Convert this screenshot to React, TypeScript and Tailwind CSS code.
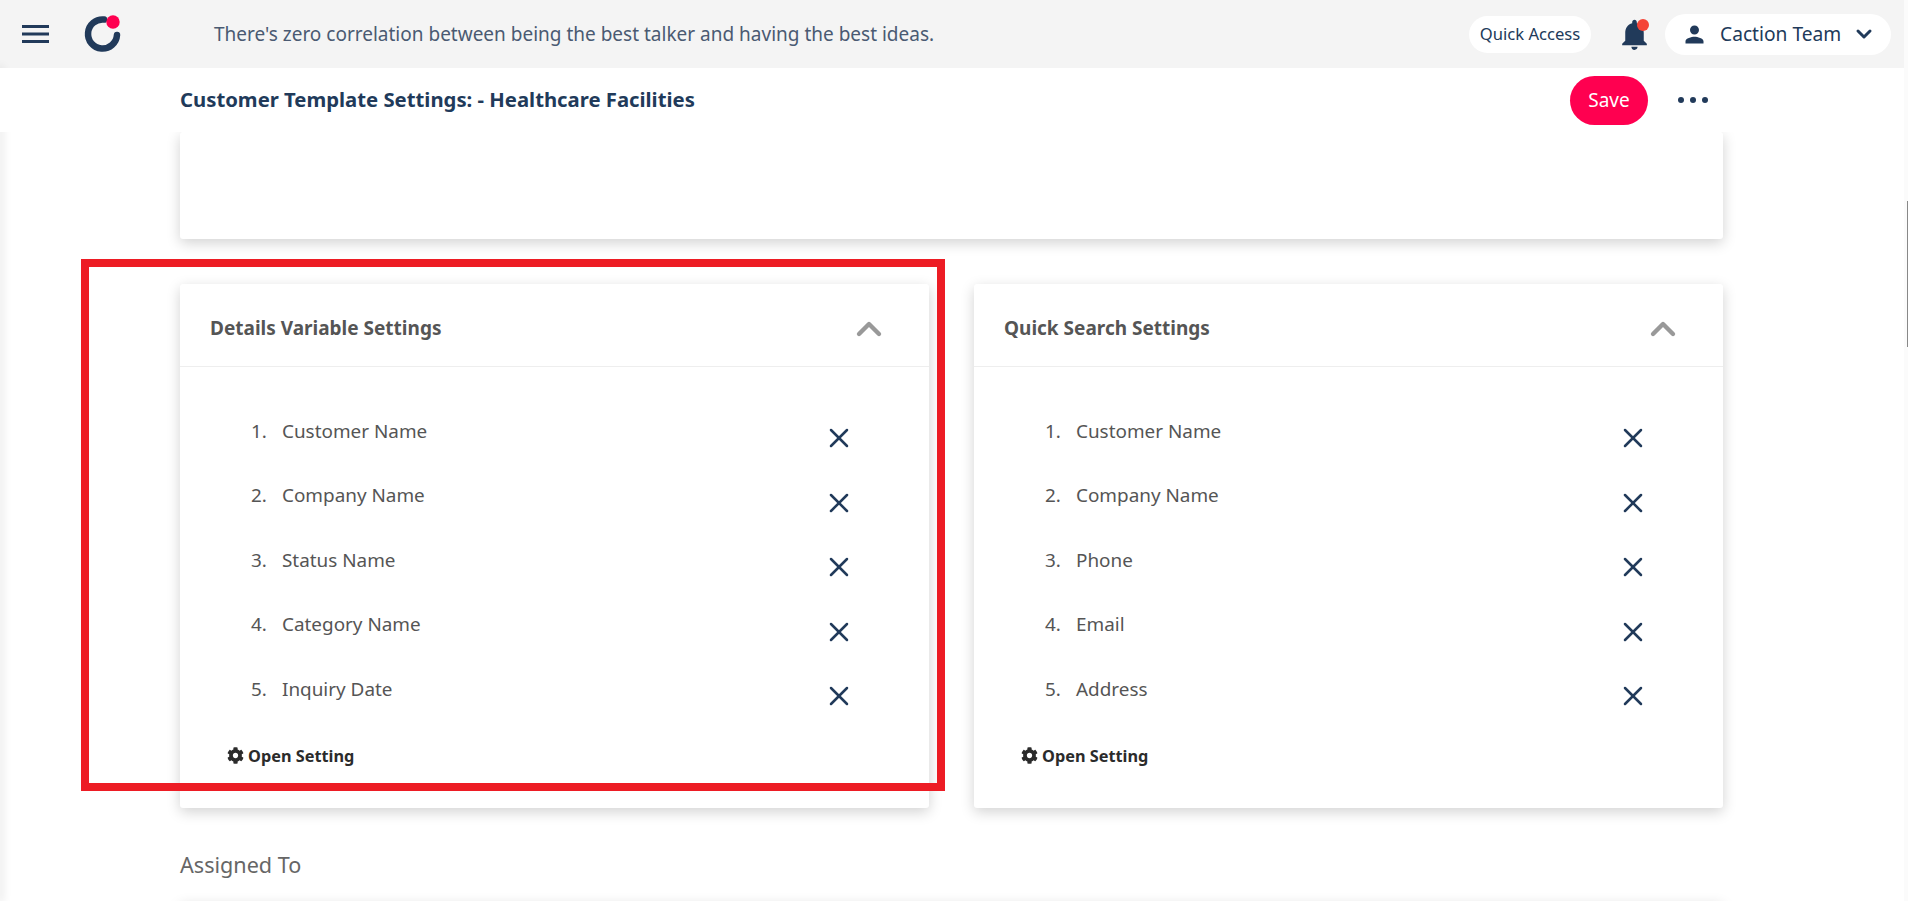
import React from 'react';
import { ChevronDown, ChevronUp, X } from 'lucide-react';
import { FaCog } from 'react-icons/fa';
import { MdNotifications, MdPerson } from 'react-icons/md';

const detailFields = ['Customer Name', 'Company Name', 'Status Name', 'Category Name', 'Inquiry Date'];
const searchFields = ['Customer Name', 'Company Name', 'Phone', 'Email', 'Address'];

const SettingsCard: React.FC<{ title: string; fields: string[] }> = ({ title, fields }) => (
  <div className="bg-white rounded-[3px] shadow-[0_4px_14px_rgba(0,0,0,0.18)] h-[524px] flex flex-col">
    <div className="h-[83px] border-b border-[#eeeeee] flex items-center justify-between pt-[7px] pl-[30px] pr-[40px]">
      <h3 className="text-[19px] font-bold text-[#555555]">{title}</h3>
      <ChevronUp className="w-10 h-10 text-[#999999]" strokeWidth={2.6} />
    </div>
    <ol className="pt-[48px] pl-[71px] pr-[74px] flex flex-col">
      {fields.map((field, i) => (
        <li key={field} className="h-[64.5px] flex justify-between text-[18.9px] text-[#555555]">
          <div className="flex h-[32px] items-center">
            <span className="w-[31px]">{i + 1}.</span>
            <span>{field}</span>
          </div>
          <X className="w-8 h-8 mt-[7px] text-[#213a5a]" strokeWidth={1.9} />
        </li>
      ))}
    </ol>
    <div className="mt-[6px] pl-[47px] flex items-center gap-[4px] text-[16.3px] font-bold text-[#2b2b2b]">
      <FaCog className="w-[17px] h-[17px]" />
      Open Setting
    </div>
  </div>
);

export default function App() {
  return (
    <div className="relative h-[901px] overflow-hidden bg-[#fbfbfb] font-['Noto_Sans',sans-serif]">
      <div className="w-[1904px] h-full bg-white">
        {/* Top bar */}
        <header className="h-[68px] bg-[#f4f4f4] flex items-center pl-[22px] pr-[13px]">
          <svg className="w-[27px] h-[18px]" viewBox="0 0 27 18" fill="#213a5a">
            <rect y="0" width="27" height="3" />
            <rect y="7.5" width="27" height="3" />
            <rect y="15" width="27" height="3" />
          </svg>
          <svg className="ml-[35px] w-[38px] h-[38px]" viewBox="0 0 38 38" fill="none">
            <path d="M20 4.6 A14.5 14.5 0 1 0 33 20" stroke="#213a5a" strokeWidth="6.5" strokeLinecap="round" />
            <circle cx="29" cy="7" r="6.7" fill="#ff0050" />
          </svg>
          <p className="ml-[92px] text-[19px] text-[#4a5a72]">There's zero correlation between being the best talker and having the best ideas.</p>
          <div className="ml-auto flex items-center">
            <div className="w-[122px] h-[37px] rounded-full bg-white flex items-center justify-center text-[16.6px] text-[#213a5a]">Quick Access</div>
            <div className="relative ml-[25px]">
              <MdNotifications className="w-[37px] h-[37px] text-[#213a5a]" />
              <span className="absolute top-[3px] left-[21px] w-[12px] h-[12px] rounded-full bg-[#f44336]" />
            </div>
            <div className="ml-[12px] h-[41px] w-[226px] rounded-full bg-white flex items-center pl-[16px] pr-[15px] text-[19.2px] text-[#213a5a]">
              <MdPerson className="w-[27px] h-[27px]" />
              <span className="ml-[12px]">Caction Team</span>
              <ChevronDown className="ml-auto w-6 h-6" strokeWidth={3} />
            </div>
          </div>
        </header>

        {/* Page title */}
        <div className="h-[64px] pl-[180px] pr-[196px] flex items-center justify-between relative z-10 bg-white">
          <h1 className="text-[20.3px] font-bold text-[#213a5a] pb-[2px]">Customer Template Settings: - Healthcare Facilities</h1>
          <div className="flex items-center gap-[30px]">
            <button className="w-[78px] h-[49px] rounded-full bg-[#ff0050] text-white text-[19px]">Save</button>
            <div className="flex gap-[6px]">
              <span className="w-[6px] h-[6px] rounded-full bg-[#213a5a]" />
              <span className="w-[6px] h-[6px] rounded-full bg-[#213a5a]" />
              <span className="w-[6px] h-[6px] rounded-full bg-[#213a5a]" />
            </div>
          </div>
        </div>

        <main className="px-[180px] w-[1903px]">
          <div className="h-[107px] bg-white rounded-[3px] shadow-[0_4px_14px_rgba(0,0,0,0.18)]" />
          <div className="mt-[45px] grid grid-cols-2 gap-[45px]">
            <SettingsCard title="Details Variable Settings" fields={detailFields} />
            <SettingsCard title="Quick Search Settings" fields={searchFields} />
          </div>
          <p className="mt-[42px] h-[30px] leading-[30px] text-[21.6px] text-[#666666]">Assigned To</p>
          <div className="mt-[22px] h-[100px] bg-white rounded-[3px] shadow-[0_4px_14px_rgba(0,0,0,0.18)]" />
        </main>
      </div>

      {/* Sidebar edge shadow */}
      <div className="absolute left-0 top-[68px] bottom-0 w-0 shadow-[0_0_10px_2px_rgba(0,0,0,0.14)]" />
      {/* Scrollbar thumb */}
      <div className="absolute right-0 top-[201px] w-px h-[146px] bg-[#888888]" />
      {/* Annotation */}
      <div className="absolute left-[81px] top-[259px] w-[864px] h-[532px] border-[8px] border-[#ed1c24]" />
    </div>
  );
}
